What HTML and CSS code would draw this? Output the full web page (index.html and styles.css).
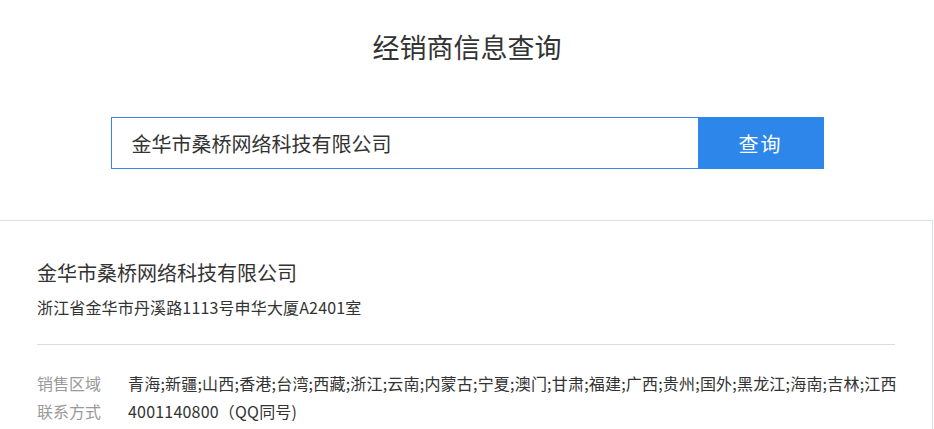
FILE: index.html
```html
<!DOCTYPE html>
<html lang="zh-CN">
<head>
    <meta charset="UTF-8">
    <meta name="viewport" content="width=device-width, initial-scale=1.0">
    <title>经销商信息查询</title>
    <link rel="stylesheet" href="styles.css">
</head>
<body>
    <div class="query-header">
        <h1 class="query-title">经销商信息查询</h1>
        <form class="search-box" onsubmit="return false;">
            <input class="search-input" type="text" value="金华市桑桥网络科技有限公司">
            <button class="search-button" type="submit">查询</button>
        </form>
    </div>

    <div class="result-card">
        <div class="dealer-name">金华市桑桥网络科技有限公司</div>
        <div class="dealer-address">浙江省金华市丹溪路1113号申华大厦A2401室</div>
        <div class="divider"></div>
        <div class="info-row">
            <span class="info-label">销售区域</span>
            <span class="info-value">青海;新疆;山西;香港;台湾;西藏;浙江;云南;内蒙古;宁夏;澳门;甘肃;福建;广西;贵州;国外;黑龙江;海南;吉林;江西</span>
        </div>
        <div class="info-row">
            <span class="info-label">联系方式</span>
            <span class="info-value">4001140800（QQ同号)</span>
        </div>
    </div>
</body>
</html>
```

FILE: styles.css
```css
* {
    margin: 0;
    padding: 0;
    box-sizing: border-box;
}

body {
    font-family: "Noto Sans CJK SC", "Noto Sans", sans-serif;
    background: #fff;
    color: #333;
    overflow: hidden;
}

.query-header {
    padding-top: 29px;
    text-align: center;
}

.query-title {
    font-size: 27px;
    font-weight: 400;
    line-height: 36px;
    color: #333;
}

.search-box {
    display: flex;
    width: 713px;
    height: 52px;
    margin: 52px auto 0;
}

.search-input {
    flex: 1;
    height: 52px;
    border: 1px solid #3a84e3;
    border-right: none;
    padding: 0 20px;
    font-family: inherit;
    font-size: 20px;
    color: #333;
    outline: none;
}

.search-button {
    width: 126px;
    height: 52px;
    border: none;
    background: #2d86ea;
    color: #fff;
    font-family: inherit;
    font-size: 20px;
    letter-spacing: 2px;
    cursor: pointer;
}

.result-card {
    width: 933px;
    margin-top: 51px;
    padding: 38px 37px 20px 37px;
    border-top: 1px solid #d9e4ea;
    border-right: 1px solid #d9e4ea;
}

.dealer-name {
    font-size: 20px;
    line-height: 28px;
}

.dealer-address {
    margin-top: 8px;
    font-size: 16px;
    line-height: 24px;
    letter-spacing: 0.15px;
}

.divider {
    height: 1px;
    margin: 25px 0 24px;
    background: #dcdcdc;
}

.info-row {
    display: flex;
    font-size: 16px;
    line-height: 28px;
    white-space: nowrap;
}

.info-label {
    width: 91px;
    flex-shrink: 0;
    color: #999;
}

.info-value {
    color: #333;
    letter-spacing: 0.2px;
}
```
